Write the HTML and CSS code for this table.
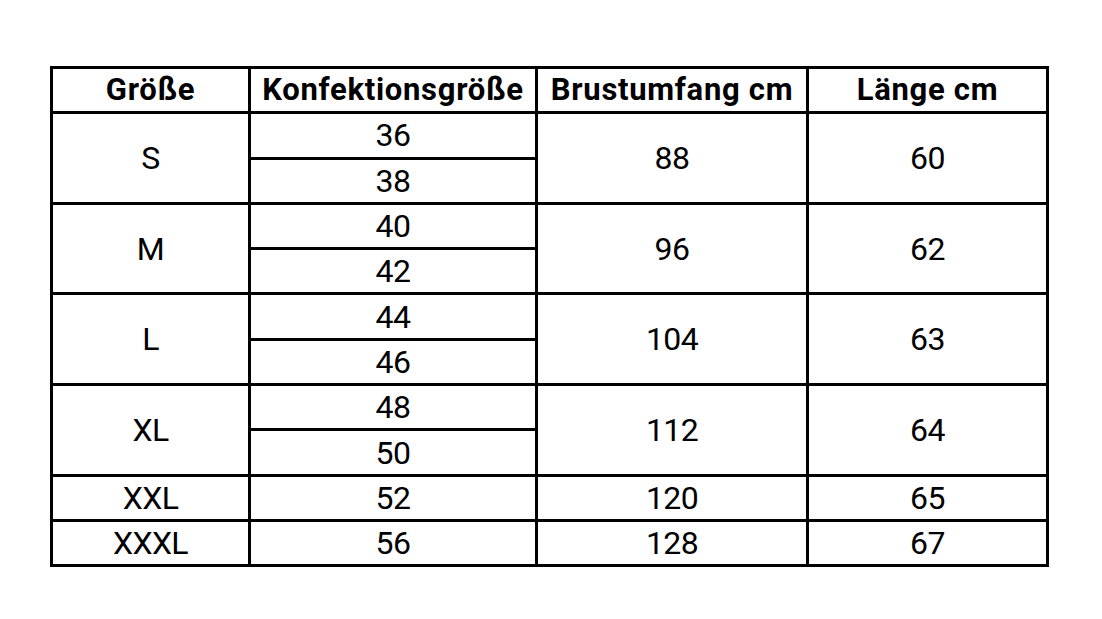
FILE: index.html
```html
<!DOCTYPE html>
<html lang="de">
<head>
<meta charset="utf-8">
<link rel="stylesheet" href="styles.css">
</head>
<body>
<div class="page">
<table class="sizes">
  <colgroup>
    <col class="c1"><col class="c2"><col class="c3"><col class="c4">
  </colgroup>
  <thead>
    <tr><th>Größe</th><th>Konfektionsgröße</th><th>Brustumfang cm</th><th>Länge cm</th></tr>
  </thead>
  <tbody>
    <tr><td rowspan="2">S</td><td>36</td><td rowspan="2">88</td><td rowspan="2">60</td></tr>
    <tr class="sub"><td>38</td></tr>
    <tr><td rowspan="2">M</td><td>40</td><td rowspan="2">96</td><td rowspan="2">62</td></tr>
    <tr class="sub"><td>42</td></tr>
    <tr><td rowspan="2">L</td><td>44</td><td rowspan="2">104</td><td rowspan="2">63</td></tr>
    <tr class="sub"><td>46</td></tr>
    <tr><td rowspan="2">XL</td><td>48</td><td rowspan="2">112</td><td rowspan="2">64</td></tr>
    <tr class="sub"><td>50</td></tr>
    <tr><td>XXL</td><td>52</td><td>120</td><td>65</td></tr>
    <tr><td>XXXL</td><td>56</td><td>128</td><td>67</td></tr>
  </tbody>
</table>
</div>
</body>
</html>
```
FILE: styles.css
```css
html, body {
  margin: 0;
  padding: 0;
  background: #fff;
}
.page {
  padding: 66px 0 0 50px;
}
.sizes {
  border-collapse: collapse;
  width: 996px;
  table-layout: fixed;
  font-family: Roboto, "Liberation Sans", sans-serif;
  color: #000;
}
.c1 { width: 198px; }
.c2 { width: 287px; }
.c3 { width: 271px; }
.c4 { width: 240px; }
.sizes th, .sizes td {
  border: 3px solid #000;
  text-align: center;
  padding: 0;
  height: 42.3px;
  line-height: 42px;
  font-size: 32px;
}
.sizes th {
  font-weight: 700;
  font-size: 31px;
  letter-spacing: 0.7px;
  line-height: 40px;
}
.sizes td {
  font-weight: 400;
  letter-spacing: -0.6px;
}
.sizes .sub td {
  border-top-width: 2px;
}
```
